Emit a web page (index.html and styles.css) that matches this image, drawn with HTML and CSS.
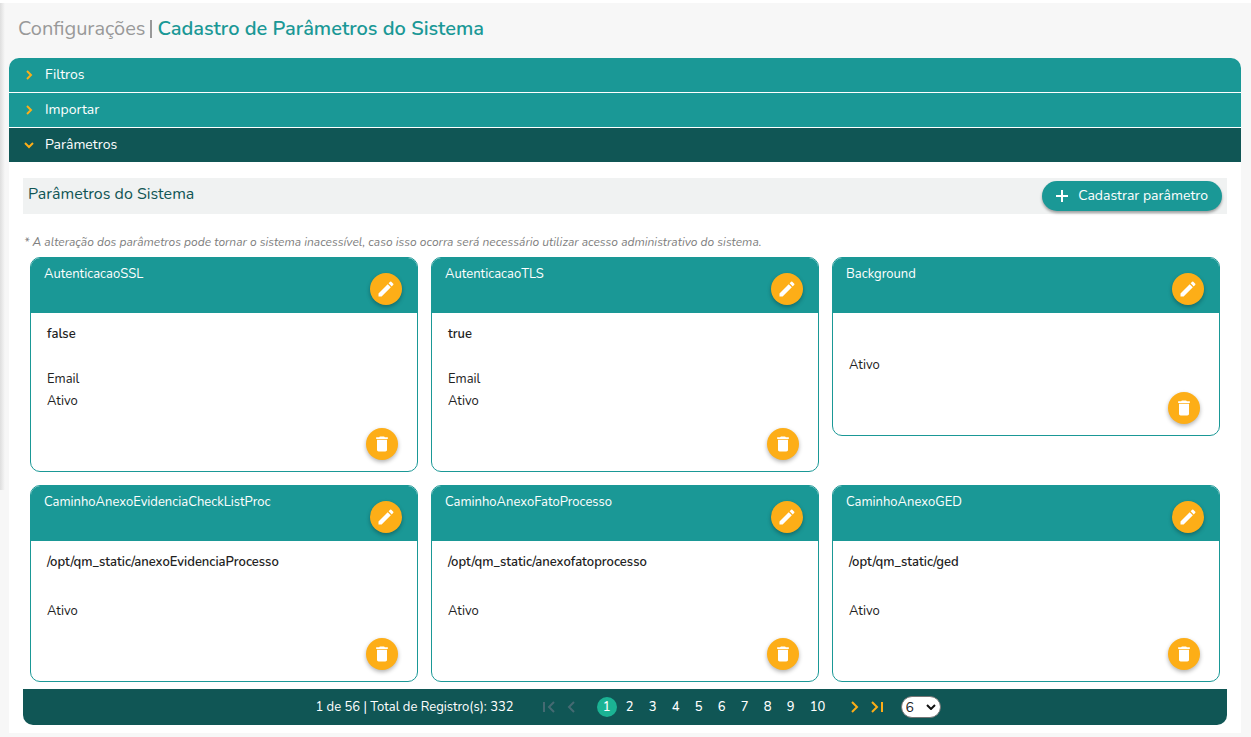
FILE: index.html
```html
<!DOCTYPE html>
<html lang="pt-BR">
<head>
<meta charset="utf-8">
<meta name="viewport" content="width=device-width, initial-scale=1">
<title>Cadastro de Parâmetros do Sistema</title>
<link rel="stylesheet" href="styles.css">
</head>
<body>
<svg class="sprite" aria-hidden="true">
  <symbol id="pencil" viewBox="0 0 24 24"><path d="M3 17.25V21h3.750L17.810 9.940l-3.750-3.750L3 17.250zM20.710 7.040a1 1 0 0 0 0-1.410l-2.340-2.340a1 1 0 0 0-1.410 0l-1.830 1.830 3.750 3.750 1.830-1.830z"/></symbol>
  <symbol id="trash" viewBox="0 0 24 24"><path d="M6 19c0 1.100.9 2 2 2h8c1.100 0 2-.9 2-2V7H6v12zM19 4h-3.500l-1-1h-5l-1 1H5v2h14V4z"/></symbol>
  <symbol id="chevron" viewBox="0 0 10 12"><path d="M2 1l5 5-5 5" fill="none" stroke="currentColor" stroke-width="2"/></symbol>
  <symbol id="chevron-end" viewBox="0 0 14 12"><path d="M2 1l5 5-5 5M12 1v10" fill="none" stroke="currentColor" stroke-width="2"/></symbol>
</svg>
<main class="page">
  <h1 class="title"><span class="title-section">Configurações</span><span class="title-bar"></span><span class="title-name">Cadastro de Parâmetros do Sistema</span></h1>
  <div class="accordion">
    <button class="tab" type="button" aria-expanded="false"><svg class="tab-icon" viewBox="0 0 10 10"><path d="M3 1l4 4-4 4"/></svg>Filtros</button>
    <button class="tab" type="button" aria-expanded="false"><svg class="tab-icon" viewBox="0 0 10 10"><path d="M3 1l4 4-4 4"/></svg>Importar</button>
    <button class="tab tab-open" type="button" aria-expanded="true"><svg class="tab-icon" viewBox="0 0 10 10"><path d="M1 3l4 4 4-4"/></svg>Parâmetros</button>
    <section class="panel">
      <div class="toolbar">
        <h2 class="toolbar-title">Parâmetros do Sistema</h2>
        <button class="add" type="button"><svg class="add-icon" viewBox="0 0 12 12"><path d="M6 0v12M0 6h12" stroke="currentColor" stroke-width="2"/></svg>Cadastrar parâmetro</button>
      </div>
      <p class="note">* A alteração dos parâmetros pode tornar o sistema inacessível, caso isso ocorra será necessário utilizar acesso administrativo do sistema.</p>
      <div class="cards">
        <article class="card">
          <header class="card-head"><h3 class="card-name">AutenticacaoSSL</h3><button class="round" type="button" aria-label="Editar"><svg class="round-icon"><use href="#pencil"/></svg></button></header>
          <div class="card-body"><p class="value">false</p><p class="category">Email</p><p class="status">Ativo</p><button class="round" type="button" aria-label="Excluir"><svg class="round-icon"><use href="#trash"/></svg></button></div>
        </article>
        <article class="card">
          <header class="card-head"><h3 class="card-name">AutenticacaoTLS</h3><button class="round" type="button" aria-label="Editar"><svg class="round-icon"><use href="#pencil"/></svg></button></header>
          <div class="card-body"><p class="value">true</p><p class="category">Email</p><p class="status">Ativo</p><button class="round" type="button" aria-label="Excluir"><svg class="round-icon"><use href="#trash"/></svg></button></div>
        </article>
        <article class="card">
          <header class="card-head"><h3 class="card-name">Background</h3><button class="round" type="button" aria-label="Editar"><svg class="round-icon"><use href="#pencil"/></svg></button></header>
          <div class="card-body"><p class="value"></p><p class="category"></p><p class="status">Ativo</p><button class="round" type="button" aria-label="Excluir"><svg class="round-icon"><use href="#trash"/></svg></button></div>
        </article>
        <article class="card">
          <header class="card-head"><h3 class="card-name">CaminhoAnexoEvidenciaCheckListProc</h3><button class="round" type="button" aria-label="Editar"><svg class="round-icon"><use href="#pencil"/></svg></button></header>
          <div class="card-body"><p class="value">/opt/qm_static/anexoEvidenciaProcesso</p><p class="category"></p><p class="status">Ativo</p><button class="round" type="button" aria-label="Excluir"><svg class="round-icon"><use href="#trash"/></svg></button></div>
        </article>
        <article class="card">
          <header class="card-head"><h3 class="card-name">CaminhoAnexoFatoProcesso</h3><button class="round" type="button" aria-label="Editar"><svg class="round-icon"><use href="#pencil"/></svg></button></header>
          <div class="card-body"><p class="value">/opt/qm_static/anexofatoprocesso</p><p class="category"></p><p class="status">Ativo</p><button class="round" type="button" aria-label="Excluir"><svg class="round-icon"><use href="#trash"/></svg></button></div>
        </article>
        <article class="card">
          <header class="card-head"><h3 class="card-name">CaminhoAnexoGED</h3><button class="round" type="button" aria-label="Editar"><svg class="round-icon"><use href="#pencil"/></svg></button></header>
          <div class="card-body"><p class="value">/opt/qm_static/ged</p><p class="category"></p><p class="status">Ativo</p><button class="round" type="button" aria-label="Excluir"><svg class="round-icon"><use href="#trash"/></svg></button></div>
        </article>
      </div>
      <nav class="pager" aria-label="Paginação">
        <span class="pager-total">1 de 56 | Total de Registro(s): 332</span>
        <div class="pager-step pager-back">
          <button class="step" type="button" disabled aria-label="Primeira página"><svg class="step-icon step-end"><use href="#chevron-end"/></svg></button>
          <button class="step" type="button" disabled aria-label="Página anterior"><svg class="step-icon"><use href="#chevron"/></svg></button>
        </div>
        <div class="pager-pages">
          <button class="num num-current" type="button" aria-current="page">1</button>
          <button class="num" type="button">2</button>
          <button class="num" type="button">3</button>
          <button class="num" type="button">4</button>
          <button class="num" type="button">5</button>
          <button class="num" type="button">6</button>
          <button class="num" type="button">7</button>
          <button class="num" type="button">8</button>
          <button class="num" type="button">9</button>
          <button class="num num-wide" type="button">10</button>
        </div>
        <div class="pager-step">
          <button class="step" type="button" aria-label="Próxima página"><svg class="step-icon"><use href="#chevron"/></svg></button>
          <button class="step" type="button" aria-label="Última página"><svg class="step-icon step-end"><use href="#chevron-end"/></svg></button>
        </div>
        <div class="size">
          <select class="size-select" aria-label="Registros por página"><option>6</option><option>12</option><option>24</option></select>
          <svg class="size-arrow" viewBox="0 0 10 6"><path d="M1 1l4 4 4-4" fill="none" stroke="currentColor" stroke-width="2"/></svg>
        </div>
      </nav>
    </section>
  </div>
</main>
</body>
</html>
```
FILE: styles.css
```css
:root {
  --teal: #1a9896;
  --deep: #105655;
  --amber: #fdae17;
}

* {
  box-sizing: border-box;
}

body {
  margin: 0;
  min-height: 100vh;
  border-top: 3px solid #fff;
  background: #f7f7f7;
  color: #212121;
  font: 14px/22px Nunito, Lato, sans-serif;
}

h1, h2, h3, p {
  margin: 0;
  font-weight: 400;
}

button, select {
  margin: 0;
  padding: 0;
  border: 0;
  font: inherit;
  cursor: pointer;
}

.sprite {
  position: absolute;
  width: 0;
  height: 0;
}

.page {
  padding: 12px 10px 4px 9px;
  background: linear-gradient(to right, #dedede, #f7f7f7) no-repeat 0 0 / 5px 487px;
}

.title {
  display: flex;
  align-items: center;
  gap: 5px;
  padding-left: 9px;
  margin-bottom: 15px;
  font-size: 20px;
  line-height: 28px;
}

.title-section {
  color: #999;
}

.title-bar {
  width: 2px;
  height: 18px;
  background: #999;
}

.title-name {
  color: var(--teal);
  font-weight: 600;
}

.accordion {
  overflow: hidden;
  border-radius: 10px 10px 0 0;
  background: #fff;
}

.tab {
  display: flex;
  align-items: center;
  gap: 11px;
  width: 100%;
  height: 34px;
  margin-bottom: 1px;
  padding: 0 15px;
  background: var(--teal);
  color: #fff;
}

.tab-open {
  margin-bottom: 0;
  background: var(--deep);
}

.tab-icon {
  width: 10px;
  height: 10px;
  fill: none;
  stroke: var(--amber);
  stroke-width: 2;
}

.panel {
  padding: 16px 14px 8px;
}

.toolbar {
  display: flex;
  align-items: center;
  justify-content: space-between;
  height: 36px;
  padding: 0 5px;
  background: #f0f2f2;
}

.toolbar-title {
  padding-bottom: 4px;
  color: var(--deep);
  font-size: 16px;
}

.add {
  display: flex;
  align-items: center;
  gap: 10px;
  height: 30px;
  padding: 0 14px;
  border-radius: 15px;
  background: var(--teal);
  color: #fff;
  box-shadow: 0 2px 3px rgba(0, 0, 0, .35);
}

.add-icon {
  width: 12px;
  height: 12px;
}

.note {
  padding: 17px 1px 4px;
  color: #808080;
  font-size: 12px;
  font-style: italic;
}

.cards {
  display: grid;
  grid-template-columns: repeat(3, 1fr);
  align-items: start;
  gap: 13px;
  padding: 0 7px 7px;
}

.card {
  overflow: hidden;
  border: 1px solid var(--teal);
  border-radius: 10px;
}

.card-head {
  display: flex;
  justify-content: space-between;
  height: 55px;
  padding: 5px 15px 0 13px;
  background: var(--teal);
  color: #fff;
}

.card-name {
  font-size: 13px;
}

.round {
  display: grid;
  flex: none;
  place-items: center;
  width: 32px;
  height: 32px;
  border-radius: 50%;
  background: var(--amber);
  color: #fff;
  box-shadow: 0 2px 4px rgba(0, 0, 0, .3);
}

.card-head .round {
  margin-top: 10px;
}

.card-body .round {
  margin: 16px 0 0 auto;
}

.round-icon {
  width: 20px;
  height: 20px;
  fill: currentColor;
}

.card-body {
  padding: 12px 19px 11px 16px;
  font-size: 13px;
}

.value {
  margin-bottom: 25px;
  font-weight: 600;
  line-height: 18px;
}

.category {
  min-height: 4px;
}

.pager {
  display: flex;
  align-items: center;
  justify-content: center;
  height: 36px;
  padding-left: 6px;
  border-radius: 0 0 10px 10px;
  background: var(--deep);
  color: #fff;
}

.pager-total {
  margin-right: 24px;
  font-size: 13px;
}

.pager-step {
  display: flex;
}

.pager-back {
  margin-right: 15px;
  transform: rotate(180deg);
  flex-direction: row-reverse;
}

.step {
  display: grid;
  place-items: center;
  width: 22px;
  height: 22px;
  background: none;
  color: var(--amber);
}

.step:disabled {
  color: #456a72;
}

.step-icon {
  width: 10px;
  height: 12px;
}

.step-end {
  width: 14px;
}

.pager-pages {
  display: flex;
  gap: 3px;
  margin-right: 12px;
}

.num {
  width: 20px;
  height: 20px;
  border-radius: 50%;
  background: none;
  color: #fff;
  font-size: 13px;
  font-weight: 500;
  line-height: 20px;
}

.num-current {
  background: #1bb394;
}

.num-wide {
  width: 28px;
}

.size {
  position: relative;
  margin-left: 13px;
}

.size-select {
  display: block;
  width: 40px;
  height: 22px;
  padding-left: 4px;
  border: 1px solid #767676;
  border-radius: 11px;
  appearance: none;
  background: #fff;
  color: #212121;
}

.size-arrow {
  position: absolute;
  top: 8px;
  right: 5px;
  width: 10px;
  height: 6px;
  color: #111;
  pointer-events: none;
}
```
